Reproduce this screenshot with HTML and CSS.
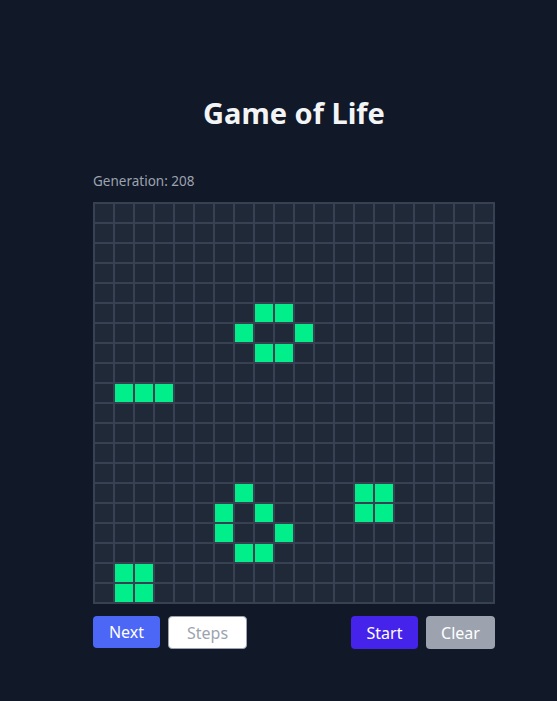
FILE: index.html
```html
<!DOCTYPE html>
<html lang="en">
<head>
<meta charset="utf-8">
<title>Game of Life</title>
<link rel="stylesheet" href="styles.css">
</head>
<body>
<main class="app">
  <h1 class="title">Game of Life</h1>
  <p class="generation">Generation: 208</p>
  <div class="board" id="board"></div>
  <div class="controls">
    <div class="group">
      <button class="btn btn-next">Next</button>
      <input class="steps" type="text" placeholder="Steps">
    </div>
    <div class="group">
      <button class="btn btn-start">Start</button>
      <button class="btn btn-clear">Clear</button>
    </div>
  </div>
</main>
<script src="script.js"></script>
</body>
</html>
```
FILE: styles.css
```css
html, body {
  margin: 0;
  padding: 0;
  background: #111827;
}
body {
  font-family: "Noto Sans", "Open Sans", sans-serif;
  color: #f3f4f6;
}
.app {
  width: 402px;
  margin-left: 93px;
  padding-top: 91px;
}
.title {
  margin: 0;
  text-align: center;
  font-size: 29px;
  font-weight: 700;
  line-height: 44px;
  color: #f3f4f6;
}
.generation {
  margin: 37px 0 0 0;
  font-size: 13.5px;
  line-height: 18px;
  color: #9ca3af;
}
.board {
  margin-top: 12px;
  display: grid;
  grid-template-columns: repeat(20, 18px);
  grid-auto-rows: 18px;
  gap: 2px;
  padding: 2px;
  background: #374151;
  width: max-content;
}
.cell {
  background: #1f2937;
}
.cell.alive {
  background: #00ef8a;
}
.controls {
  margin-top: 12px;
  display: flex;
  justify-content: space-between;
  align-items: flex-start;
}
.group {
  display: flex;
  gap: 8px;
}
.btn {
  border: none;
  border-radius: 4px;
  color: #ffffff;
  font-family: inherit;
  font-size: 16px;
  height: 32px;
  padding: 0 14px;
  cursor: pointer;
}
.btn-next {
  background: #4c66f6;
  width: 67px;
}
.btn-start {
  background: #4623ea;
  width: 67px;
  height: 33px;
}
.btn-clear {
  background: #9ca3af;
  width: 69px;
  height: 33px;
}
.steps {
  box-sizing: border-box;
  width: 79px;
  height: 33px;
  border: 1px solid #9ca3af;
  border-radius: 4px;
  background: #ffffff;
  font-family: inherit;
  font-size: 16px;
  text-align: center;
  padding: 0 8px;
}
.steps::placeholder {
  color: #9ca3af;
}
```
FILE: script.js
```js
const alive = [
  [5,8],[5,9],[6,7],[6,10],[7,8],[7,9],
  [9,1],[9,2],[9,3],
  [14,7],[14,13],[14,14],
  [15,6],[15,8],[15,13],[15,14],
  [16,6],[16,9],
  [17,7],[17,8],
  [18,1],[18,2],[19,1],[19,2]
];
const set = new Set(alive.map(([r,c]) => r + ',' + c));
const board = document.getElementById('board');
for (let r = 0; r < 20; r++) {
  for (let c = 0; c < 20; c++) {
    const d = document.createElement('div');
    d.className = 'cell' + (set.has(r + ',' + c) ? ' alive' : '');
    board.appendChild(d);
  }
}
```
